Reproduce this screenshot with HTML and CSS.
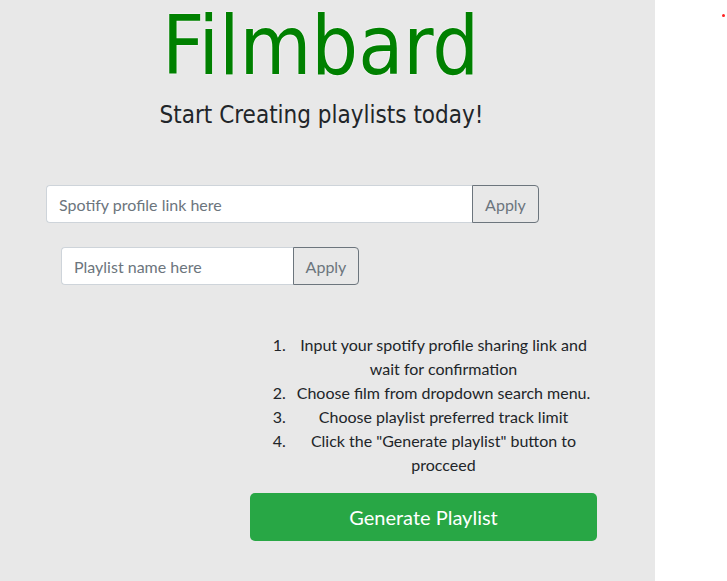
FILE: index.html
```html
<!DOCTYPE html>
<html>
<head>
<meta charset="utf-8">
<link rel="stylesheet" href="styles.css">
</head>
<body>
<div class="page">
  <main class="panel">
    <h1 class="title">Filmbard</h1>
    <h2 class="subtitle">Start Creating playlists today!</h2>
    <div class="group group-link">
      <input class="field" type="text" placeholder="Spotify profile link here">
      <button class="apply">Apply</button>
    </div>
    <div class="group group-name">
      <input class="field" type="text" placeholder="Playlist name here">
      <button class="apply">Apply</button>
    </div>
    <div class="steps">
      <ol class="steps-list">
        <li>Input your spotify profile sharing link and wait for confirmation</li>
        <li>Choose film from dropdown search menu.</li>
        <li>Choose playlist preferred track limit</li>
        <li>Click the "Generate playlist" button to procceed</li>
      </ol>
      <button class="generate">Generate Playlist</button>
    </div>
  </main>
  <span class="dot"></span>
</div>
</body>
</html>
```
FILE: styles.css
```css
html, body {
  margin: 0;
  padding: 0;
  background: #ffffff;
}
body {
  font-family: "Lato", "Open Sans", sans-serif;
  color: #212529;
}
.page {
  position: relative;
  width: 727px;
  height: 581px;
  overflow: hidden;
}
.panel {
  width: 655px;
  height: 581px;
  background: #e8e8e8;
  display: flex;
  flex-direction: column;
  box-sizing: border-box;
}
.title {
  margin: 0;
  padding-right: 14px;
  font-family: "DejaVu Sans Condensed", "DejaVu Sans", sans-serif;
  font-stretch: condensed;
  font-weight: normal;
  font-size: 82px;
  line-height: 92px;
  color: #008000;
  text-align: center;
  text-shadow: 0 0 2px #ffffff, 0 0 1px #ffffff;
}
.subtitle {
  margin: 7px 0 0;
  padding-right: 12px;
  font-family: "DejaVu Sans Condensed", "DejaVu Sans", sans-serif;
  font-stretch: condensed;
  font-weight: normal;
  font-size: 24px;
  line-height: 32px;
  text-align: center;
  color: #212529;
}
.group {
  display: flex;
  height: 38px;
}
.group-link {
  margin: 54px 0 0 46px;
  width: 493px;
}
.group-name {
  margin: 24px 0 0 61px;
  width: 298px;
}
.field {
  flex: 1;
  min-width: 0;
  box-sizing: border-box;
  height: 38px;
  border: 1px solid #ced4da;
  border-right: none;
  border-radius: 4px 0 0 4px;
  background: #fff;
  padding: 6px 12px;
  font-family: inherit;
  font-size: 16px;
  color: #495057;
  outline: none;
}
.field::placeholder {
  color: #6c757d;
}
.apply {
  box-sizing: border-box;
  width: 67px;
  height: 38px;
  border: 1px solid #6c757d;
  border-radius: 0 4px 4px 0;
  background: transparent;
  color: #6c757d;
  font-family: inherit;
  font-size: 16px;
  padding: 0;
}
.group-name .apply {
  width: 66px;
}
.steps {
  margin: 48px 0 0 250px;
  width: 347px;
  display: flex;
  flex-direction: column;
}
.steps-list {
  margin: 0;
  padding-left: 40px;
  text-align: center;
  font-size: 16px;
  line-height: 24px;
}
.generate {
  margin-top: 16px;
  height: 48px;
  border: none;
  border-radius: 5px;
  background: #28a745;
  color: #ffffff;
  font-family: inherit;
  font-size: 20px;
}
.dot {
  position: absolute;
  left: 722px;
  top: 14px;
  width: 3px;
  height: 3px;
  border-radius: 50%;
  background: #ff2020;
}
```
